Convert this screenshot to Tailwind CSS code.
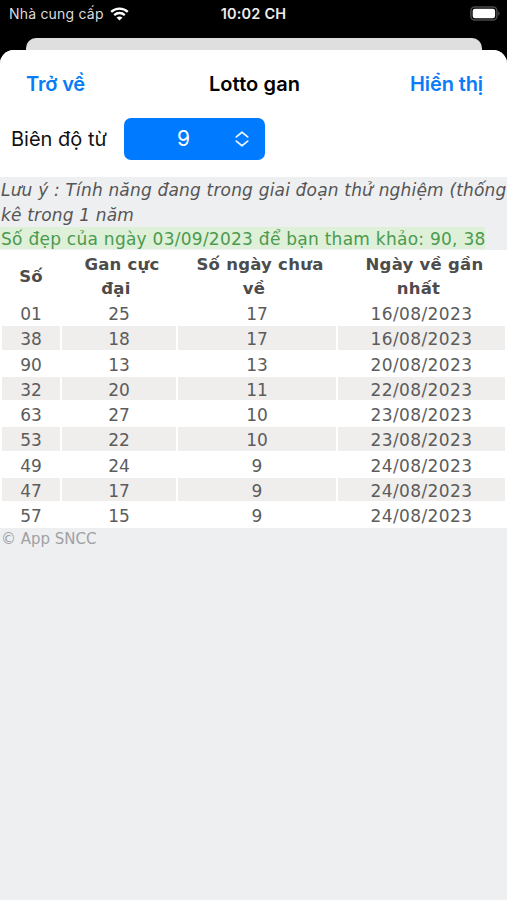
<!DOCTYPE html>
<html lang="vi">
<head>
<meta charset="utf-8">
<title>Lotto gan</title>
<script src="https://cdn.jsdelivr.net/npm/@tailwindcss/browser@4"></script>
</head>
<body class="bg-black">
<div class="w-[507px] h-[900px] overflow-hidden bg-black flex flex-col font-['Inter',sans-serif]">
  <header class="h-[38px] shrink-0 grid grid-cols-3 items-start pt-[3px] px-[9px] text-white whitespace-nowrap">
    <div class="flex items-center gap-[6px] h-[21px]">
      <span class="text-[14px] tracking-[0.2px] text-[#dcdcdc]">Nhà cung cấp</span>
      <svg class="w-[19px] h-[14px]" viewBox="0 0 19 14" fill="none" stroke="#fff" stroke-width="2.3"><path d="M1.2 4.9C5.8 .5 13.2 .5 17.8 4.9M4.2 8.1C7.2 5.3 11.8 5.3 14.8 8.1"/><path d="M9.5 13.5L6.5 10.5C8.2 9 10.8 9 12.5 10.5Z" fill="#fff" stroke="none"/></svg>
    </div>
    <span class="text-center text-[14.5px] tracking-[0.2px] font-semibold leading-[22px] text-[#ededed]">10:02 CH</span>
    <div class="flex justify-end h-[21px] items-center -mr-[2px]">
      <svg class="w-[30px] h-[15px]" viewBox="0 0 30 15"><rect x=".9" y=".9" width="26" height="13.2" rx="3.8" fill="none" stroke="#4a4a4a" stroke-width="1.5"/><rect x="2.7" y="2.7" width="22.4" height="9.6" rx="2.2" fill="#fff"/><path d="M28.3 5.2C30 6 30 9 28.3 9.8Z" fill="#555"/></svg>
    </div>
  </header>
  <div class="h-[12px] shrink-0 ml-[26px] mr-[25px] bg-[#dfdfdf] rounded-t-[10px]"></div>
  <main class="flex-1 bg-[#eeeff1] rounded-t-[14px] overflow-hidden flex flex-col">
    <section class="bg-white h-[127px] shrink-0">
      <nav class="h-[68px] flex items-center justify-between pl-[26px] pr-[24px] text-[20px] whitespace-nowrap">
        <span class="text-[#087cf8] font-semibold tracking-[-0.15px] w-[77px]">Trở về</span>
        <span class="font-semibold text-black tracking-[0.1px]">Lotto gan</span>
        <span class="text-[#087cf8] font-semibold tracking-[-0.1px] w-[77px] flex justify-end">Hiển thị</span>
      </nav>
      <div class="flex items-center pl-[11px] h-[42px] text-[20px] text-[#111]">
        <span class="w-[113px] whitespace-nowrap">Biên độ từ</span>
        <div class="w-[141px] h-[42px] rounded-[7px] bg-[#007aff] text-white flex items-center">
          <span class="w-[119px] text-center text-[21px]">9</span>
          <svg class="w-[14px] h-[16px] -ml-[8px]" viewBox="0 0 14 16" fill="none" stroke="#e5f1ff" stroke-width="1.8" stroke-linecap="round" stroke-linejoin="round"><path d="M1.3 5.9L7 1.2L12.7 5.9M1.3 10.1L7 14.8L12.7 10.1"/></svg>
        </div>
      </div>
    </section>
    <section class="font-['DejaVu_Sans',sans-serif] text-[17px] text-[#555] whitespace-nowrap">
      <div class="h-[50px] pt-px leading-[25px] italic pl-px">
        <p class="tracking-[0.18px]">Lưu ý : Tính năng đang trong giai đoạn thử nghiệm (thống</p>
        <p class="tracking-[0.16px]">kê trong 1 năm</p>
      </div>
      <div class="h-[23px] flex"><p class="h-[22px] leading-[25px] pl-px bg-[#dff0d8] text-[#4b9a50] tracking-[0.26px] w-[485px]">Số đẹp của ngày 03/09/2023 để bạn tham khảo: 90, 38</p></div>
      <div class="bg-white px-[2px] h-[278px] pt-[2px] text-center">
        <div class="grid grid-cols-[58px_114px_158px_167px] gap-x-[2px] h-[49px] pt-px leading-[24px] font-bold text-[16.5px] tracking-[0.25px] text-[#4c4c4c] items-center">
          <div>Số</div>
          <div><p class="pl-[6px]">Gan cực</p><p class="pr-[6px]">đại</p></div>
          <div><p class="pl-[6px]">Số ngày chưa</p><p class="pr-[6px]">về</p></div>
          <div><p class="pl-[6px]">Ngày về gần</p><p class="pr-[6px]">nhất</p></div>
        </div>
        <div id="rows" class="flex flex-col gap-[2px] text-[#5c5c5c]"></div>
      </div>
      <footer class="text-[15px] leading-[22px] text-[#a0a1a3] pl-px">© App SNCC</footer>
    </section>
  </main>
</div>
<script>
const data = [
  ['01','25','17','16/08/2023'],['38','18','17','16/08/2023'],['90','13','13','20/08/2023'],
  ['32','20','11','22/08/2023'],['63','27','10','23/08/2023'],['53','22','10','23/08/2023'],
  ['49','24','9','24/08/2023'],['47','17','9','24/08/2023'],['57','15','9','24/08/2023']
];
document.getElementById('rows').innerHTML = data.map((row, i) =>
  '<div class="grid grid-cols-[58px_114px_158px_167px] gap-x-[2px] h-[23.25px] leading-[26px]">' +
  row.map((v, c) => `<div class="h-[23.25px] ${i % 2 ? 'bg-[#efeeed]' : 'bg-white'} ${c === 3 ? 'tracking-[0.4px]' : ''}">${v}</div>`).join('') +
  '</div>').join('');
</script>
</body>
</html>
